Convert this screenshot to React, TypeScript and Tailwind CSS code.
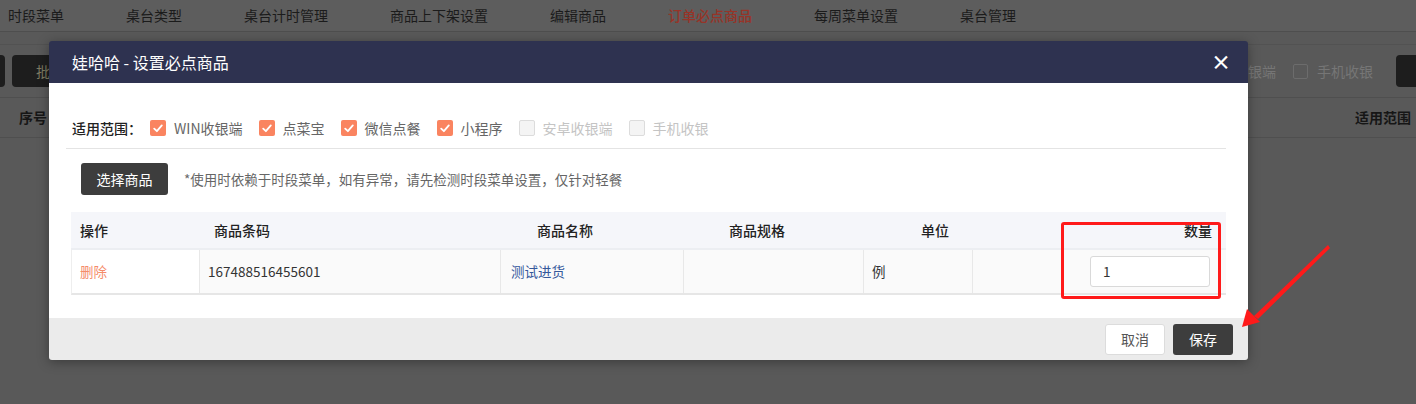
import React from 'react';

const tabs = ['时段菜单', '桌台类型', '桌台计时管理', '商品上下架设置', '编辑商品', '订单必点商品', '每周菜单设置', '桌台管理'];

const scopes = [
  { label: 'WIN收银端', checked: true },
  { label: '点菜宝', checked: true },
  { label: '微信点餐', checked: true },
  { label: '小程序', checked: true },
  { label: '安卓收银端', checked: false },
  { label: '手机收银', checked: false },
];

function Check({ checked }: { checked: boolean }) {
  if (!checked) {
    return <span className="w-4 h-4 rounded-[2px] border border-[#dcdcdc] bg-[#f4f4f4]" />;
  }
  return (
    <span className="w-4 h-4 rounded-[2px] bg-[#fa8460] flex items-center justify-center">
      <svg width="10" height="9" viewBox="0 0 10 9" fill="none">
        <path d="M1.2 4.6 L3.9 7.2 L8.8 1.4" stroke="#fff" strokeWidth="1.8" strokeLinecap="round" strokeLinejoin="round" />
      </svg>
    </span>
  );
}

export default function App() {
  return (
    <div className="relative w-[1416px] h-[404px] overflow-hidden bg-[#595959] text-[14px] font-['Noto_Sans_CJK_SC','Noto_Sans',sans-serif]">
      {/* page under the overlay */}
      <div className="h-[32px] flex items-center pl-[8px] gap-[62px] border-b border-[#4e4e4e] bg-[#5d5d5d] text-[14px] text-[#1b1b1b]">
        {tabs.map((t) => (
          <span key={t} className={t === '订单必点商品' ? 'text-[#973428] font-medium' : ''}>{t}</span>
        ))}
      </div>
      <div className="h-[13px] border-b border-[#525252]" />
      <div className="h-[53px] flex items-center justify-between border-b border-[#4f4f4f]">
        <div className="flex items-center gap-[7px]">
          <span className="w-[5px] h-[32px] rounded-r-[4px] bg-[#1d1d1d]" />
          <span className="w-[60px] h-[32px] rounded-[4px] bg-[#1d1d1d] pl-[24px] flex items-center text-[#7d7b62] text-[14px]">批</span>
        </div>
        <div className="flex items-center text-[14px] text-[#767676]">
          <span>收银端</span>
          <span className="ml-[17px] w-[15px] h-[15px] rounded-[2px] border border-[#6c6c6c]" />
          <span className="ml-[9px]">手机收银</span>
          <span className="ml-[23px] w-[20px] h-[32px] rounded-l-[4px] bg-[#1d1d1d]" />
        </div>
      </div>
      <div className="h-[40px] flex items-center justify-between px-[19px] pr-[5px] border-b border-[#4f4f4f] text-[14px] font-bold text-[#161616]">
        <span>序号</span>
        <span>适用范围</span>
      </div>

      {/* modal */}
      <div className="absolute left-[49px] top-[41px] w-[1199px] rounded-[3px] overflow-hidden shadow-[0_2px_12px_rgba(0,0,0,0.35)]">
        <div className="h-[42px] bg-[#2e3250] flex items-center justify-between pl-[23px] pr-[17px] text-white">
          <span className="text-[16px]">娃哈哈 - 设置必点商品</span>
          <span className="text-[20px] font-bold leading-none">×</span>
        </div>
        <div className="bg-white pl-[17px] pr-[22px] pt-[33px] pb-[23px]">
          <div className="flex items-center h-[24px] pl-[6px]">
            <span className="text-[#222] font-medium mr-[8px]">适用范围：</span>
            <div className="flex items-center gap-[16px]">
              {scopes.map((s) => (
                <label key={s.label} className="flex items-center gap-[8px]">
                  <Check checked={s.checked} />
                  <span className={s.checked ? 'text-[#666]' : 'text-[#c4c4c4]'}>{s.label}</span>
                </label>
              ))}
            </div>
          </div>
          <div className="mt-[8px] border-t border-[#e4e4e4]" />
          <div className="mt-[14px] flex items-center pl-[15px]">
            <button className="w-[87px] h-[32px] rounded-[3px] bg-[#3d3d3d] text-white text-[14px]">选择商品</button>
            <span className="ml-[16px] text-[13.5px] text-[#666]">*使用时依赖于时段菜单，如有异常，请先检测时段菜单设置，仅针对轻餐</span>
          </div>
          <div className="mt-[17px] ml-[5px] text-[#333]">
            <div className="h-[38px] flex items-center bg-[#f5f6fa] border-b-2 border-[#eceef2] font-medium text-[#222]">
              <span className="w-[134px] pl-[9px]">操作</span>
              <span className="w-[323px] pl-[9px]">商品条码</span>
              <span className="w-[192px] pl-[9px]">商品名称</span>
              <span className="w-[192px] pl-[9px]">商品规格</span>
              <span className="w-[188px] pl-[9px]">单位</span>
              <span className="flex-1 text-right pr-[14px]">数量</span>
            </div>
            <div className="h-[45px] flex items-stretch border-b-2 border-[#e6e6e6] border-l border-l-[#eeeeee] text-[13.5px]">
              <div className="w-[127px] bg-white pl-[8px] flex items-center text-[#f58b6a]">删除</div>
              <div className="w-[301px] bg-[#fafafa] border-l border-[#e8e8e8] pl-[8px] flex items-center">167488516455601</div>
              <div className="w-[183px] bg-[#fafafa] border-l border-[#e8e8e8] pl-[10px] flex items-center text-[#34589a]">测试进货</div>
              <div className="w-[180px] bg-[#fafafa] border-l border-[#e8e8e8]" />
              <div className="w-[109px] bg-[#fafafa] border-l border-[#e8e8e8] pl-[8px] flex items-center">例</div>
              <div className="flex-1 bg-[#fafafa] border-l border-[#e8e8e8] flex items-center justify-end pr-[16px]">
                <div className="w-[120px] h-[31px] rounded-[3px] border border-[#d9d9d9] bg-white pl-[12px] flex items-center text-[#333]">1</div>
              </div>
            </div>
          </div>
        </div>
        <div className="h-[42px] bg-[#ebebeb] flex items-center justify-end gap-[8px] pr-[15px]">
          <button className="w-[60px] h-[31px] rounded-[3px] border border-[#dcdcdc] bg-white text-[#555] text-[14px]">取消</button>
          <button className="w-[60px] h-[31px] rounded-[3px] bg-[#3d3d3d] text-white text-[14px]">保存</button>
        </div>
      </div>

      {/* annotation */}
      <div className="absolute left-[1061px] top-[222px] w-[160px] h-[77px] rounded-[3px] border-[3px] border-[#ff1a1a]" />
      <svg className="absolute left-[1235px] top-[240px]" width="100" height="95" viewBox="0 0 100 95">
        <polygon points="93,5 95,8 23,79 19,76" fill="#ff1a1a" />
        <polygon points="7,87 12,69 25,82" fill="#ff1a1a" />
      </svg>
    </div>
  );
}
